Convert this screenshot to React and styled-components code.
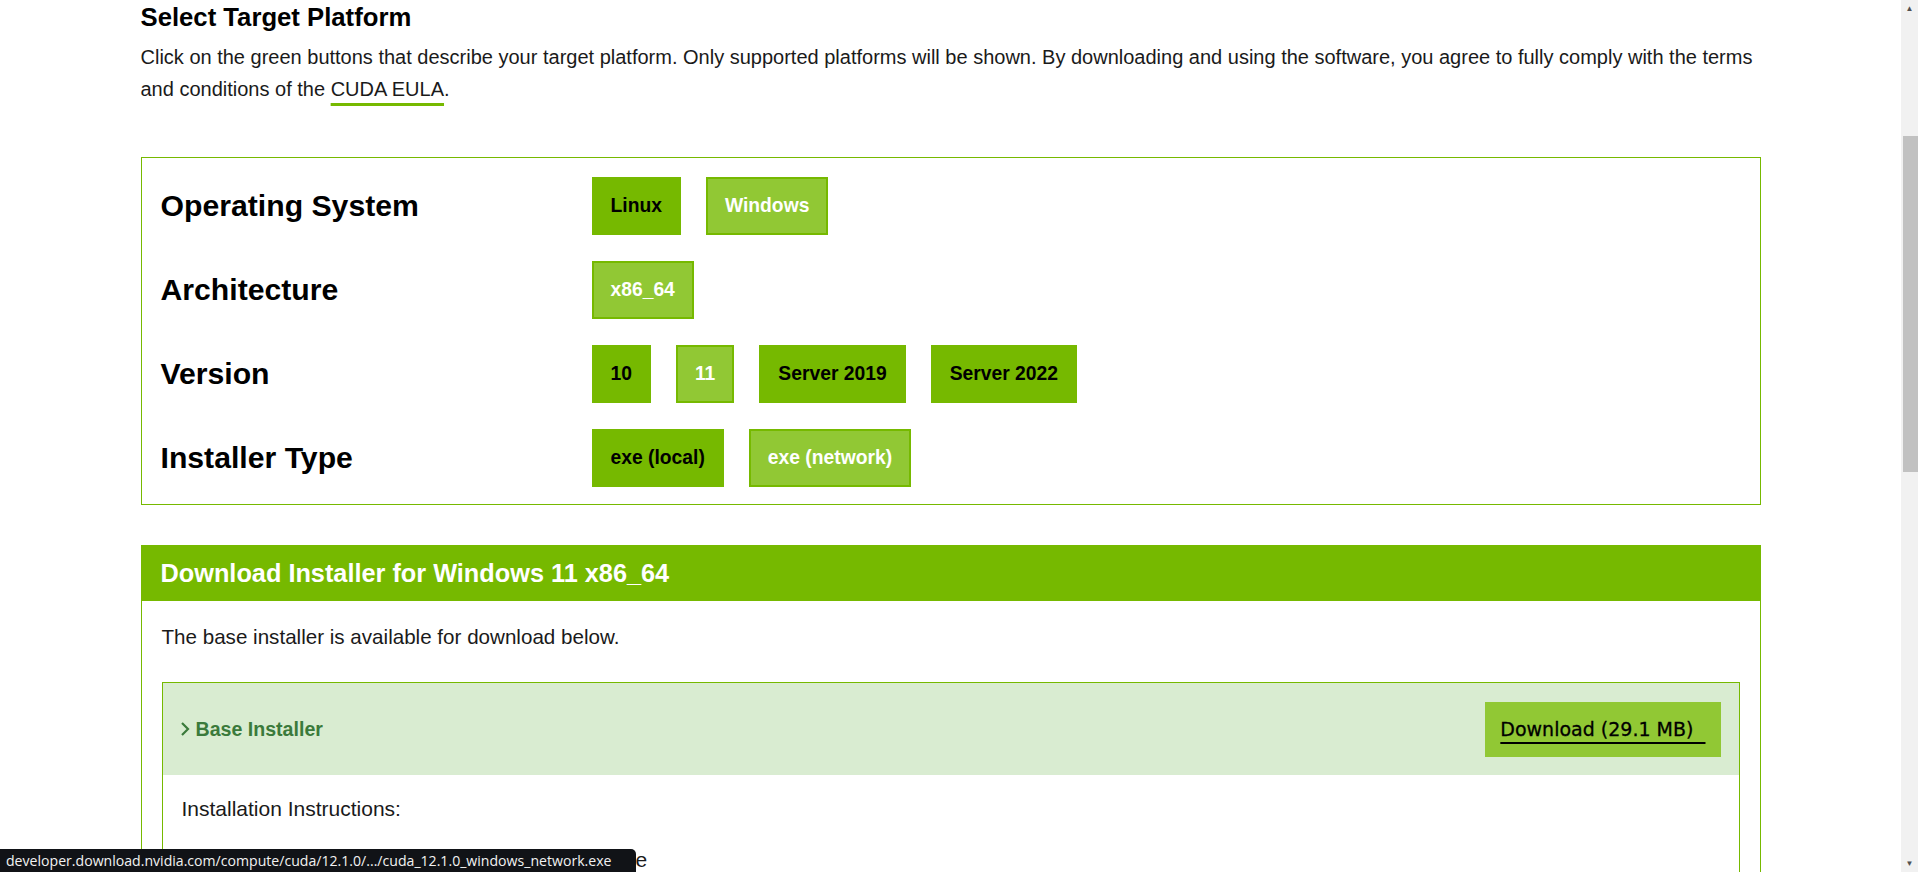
import React from 'react';
import styled, { createGlobalStyle } from 'styled-components';

const GlobalStyle = createGlobalStyle`
  html, body {
    margin: 0;
    padding: 0;
    background: #fff;
  }
  body {
    font-family: "Liberation Sans", Arial, sans-serif;
    color: #1a1a1a;
  }
`;

const Page = styled.div`
  display: flex;
  height: 100vh;
  overflow: hidden;
`;

const Main = styled.main`
  flex: 1;
  min-width: 0;
  padding-top: 1px;
`;

const Content = styled.div`
  width: 1620px;
  margin: 0 auto;
`;

const Title = styled.h2`
  margin: 0;
  font-size: 25.7px;
  line-height: 32px;
  font-weight: 700;
  color: #000;
`;

const Intro = styled.p`
  margin: 8px 0 0;
  font-size: 20px;
  line-height: 32px;
  color: #1a1a1a;
`;

const EulaLink = styled.a`
  color: inherit;
  text-decoration: underline;
  text-decoration-color: #76b900;
  text-decoration-thickness: 3px;
  text-underline-offset: 7px;
`;

const Selector = styled.section`
  margin-top: 52px;
  border: 1px solid #76b900;
  padding: 19px 19px 17px;
  display: flex;
  flex-direction: column;
  gap: 26px;
`;

const Row = styled.div`
  display: grid;
  grid-template-columns: 431px 1fr;
  align-items: center;
  height: 58px;
`;

const Label = styled.div`
  font-size: 30.2px;
  font-weight: 700;
  color: #000;
`;

const Options = styled.div`
  display: flex;
  gap: 25px;
  height: 100%;
`;

const OptionButton = styled.button`
  height: 58px;
  padding: 0 17px;
  border: 2px solid #76b900;
  background: ${(p) => (p.$active ? '#91c834' : '#76b900')};
  color: ${(p) => (p.$active ? '#fff' : '#000')};
  font-family: "Liberation Sans", Arial, sans-serif;
  font-size: 19.3px;
  font-weight: 700;
  cursor: pointer;
`;

const DownloadSection = styled.section`
  margin-top: 40px;
  border: 1px solid #76b900;
`;

const SectionHeader = styled.h3`
  margin: -1px -1px 0;
  height: 56px;
  padding-left: 20px;
  background: #76b900;
  color: #fff;
  font-size: 25.3px;
  font-weight: 700;
  line-height: 56px;
`;

const SectionBody = styled.div`
  padding: 20px 20px 0;
`;

const Note = styled.p`
  margin: 0 0 29px;
  font-size: 20.6px;
  line-height: 32px;
`;

const InstallerCard = styled.div`
  border: 1px solid #76b900;
`;

const CardHeader = styled.div`
  height: 92px;
  display: flex;
  align-items: center;
  justify-content: space-between;
  padding: 0 18px 0 17px;
  background: #d9ecd1;
`;

const CardTitle = styled.div`
  display: flex;
  align-items: center;
  gap: 6px;
  font-size: 19.6px;
  font-weight: 700;
  color: #3b7a3b;
`;

const DownloadButton = styled.a`
  height: 55px;
  display: flex;
  align-items: center;
  padding: 0 15px;
  background: #91c834;
  color: #000;
  font-family: "DejaVu Sans", Verdana, sans-serif;
  font-size: 19px;
  text-decoration: underline;
  text-decoration-thickness: 2px;
  text-underline-offset: 6px;
  white-space: pre;
  -webkit-text-stroke: 0.3px #000;
`;

const CardBody = styled.div`
  padding: 18px 19px 0;
  font-size: 21px;
  line-height: 32px;
`;

const Steps = styled.ol`
  margin: 19px 0 0;
  padding-left: 14px;
`;

const ScrollTrack = styled.div`
  width: 17px;
  flex: none;
  background: #f1f1f1;
  display: flex;
  flex-direction: column;
  align-items: center;
`;

const Arrow = styled.div`
  height: 17px;
  display: flex;
  align-items: center;
  justify-content: center;
  font-size: 8px;
  color: #505050;
`;

const ThumbArea = styled.div`
  flex: 1;
  width: 100%;
  padding-top: 119px;
  box-sizing: border-box;
`;

const Thumb = styled.div`
  margin-left: 2px;
  height: 336px;
  background: #c1c1c1;
`;

const StatusBar = styled.div`
  position: fixed;
  left: 0;
  bottom: 0;
  height: 23px;
  padding: 0 25px 0 6px;
  display: flex;
  align-items: center;
  background: #111317;
  color: #f2f2f2;
  border-top-right-radius: 5px;
  font-family: "Open Sans", "Noto Sans", sans-serif;
  font-size: 14.1px;
`;

const rows = [
  { label: 'Operating System', options: ['Linux', 'Windows'], active: 'Windows' },
  { label: 'Architecture', options: ['x86_64'], active: 'x86_64' },
  { label: 'Version', options: ['10', '11', 'Server 2019', 'Server 2022'], active: '11' },
  { label: 'Installer Type', options: ['exe (local)', 'exe (network)'], active: 'exe (network)' },
];

const Chevron = () => (
  <svg width="10" height="16" viewBox="0 0 10 16" fill="none">
    <path d="M2 2l6 6-6 6" stroke="#3b7a3b" strokeWidth="2.2" />
  </svg>
);

const App = () => (
  <>
    <GlobalStyle />
    <Page>
      <Main>
        <Content>
          <Title>Select Target Platform</Title>
          <Intro>
            Click on the green buttons that describe your target platform. Only supported platforms
            will be shown. By downloading and using the software, you agree to fully comply with the
            terms and conditions of the <EulaLink href="#">CUDA EULA</EulaLink>.
          </Intro>

          <Selector>
            {rows.map((row) => (
              <Row key={row.label}>
                <Label>{row.label}</Label>
                <Options>
                  {row.options.map((opt) => (
                    <OptionButton key={opt} $active={opt === row.active}>
                      {opt}
                    </OptionButton>
                  ))}
                </Options>
              </Row>
            ))}
          </Selector>

          <DownloadSection>
            <SectionHeader>Download Installer for Windows 11 x86_64</SectionHeader>
            <SectionBody>
              <Note>The base installer is available for download below.</Note>
              <InstallerCard>
                <CardHeader>
                  <CardTitle>
                    <Chevron />
                    Base Installer
                  </CardTitle>
                  <DownloadButton href="#">{'Download (29.1 MB)  '}</DownloadButton>
                </CardHeader>
                <CardBody>
                  Installation Instructions:
                  <Steps>
                    <li>Double click cuda_12.1.0_windows_network.exe</li>
                    <li>Follow on-screen prompts</li>
                  </Steps>
                </CardBody>
              </InstallerCard>
            </SectionBody>
          </DownloadSection>
        </Content>
      </Main>
      <ScrollTrack>
        <Arrow>▲</Arrow>
        <ThumbArea>
          <Thumb />
        </ThumbArea>
        <Arrow>▼</Arrow>
      </ScrollTrack>
      <StatusBar>developer.download.nvidia.com/compute/cuda/12.1.0/.../cuda_12.1.0_windows_network.exe</StatusBar>
    </Page>
  </>
);

export default App;
